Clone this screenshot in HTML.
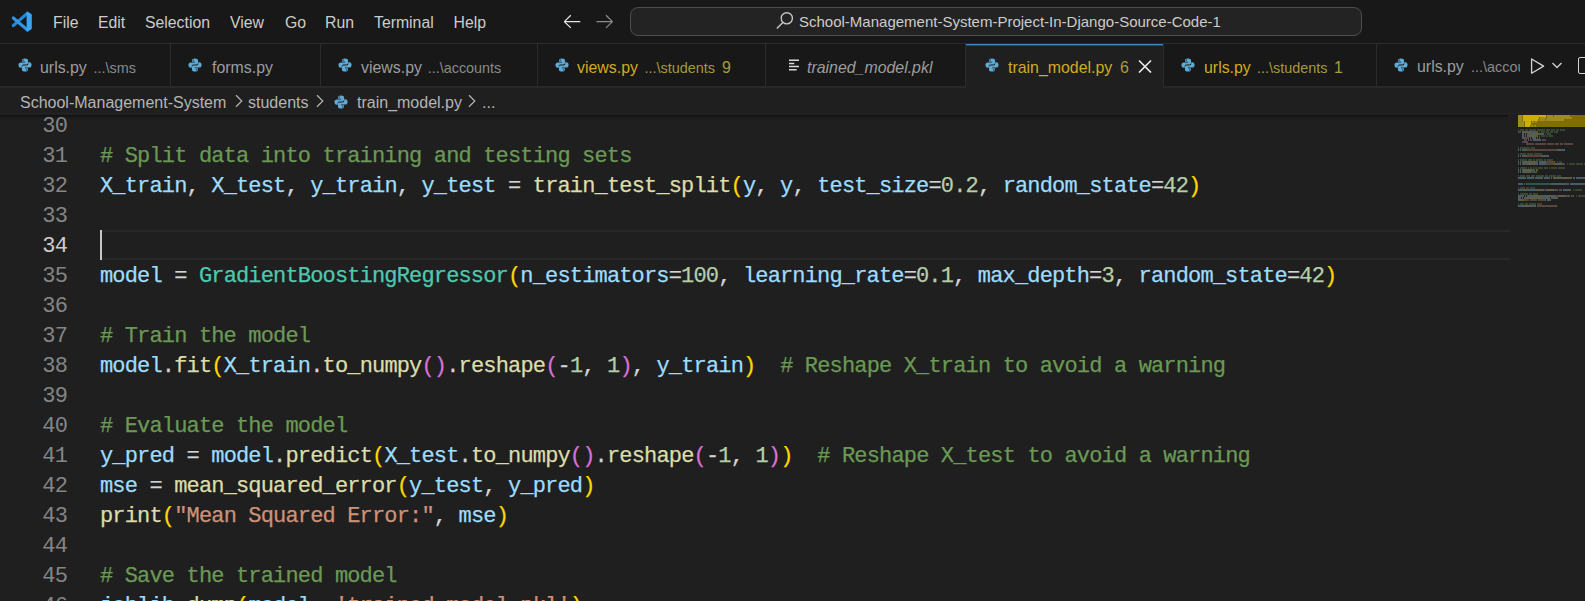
<!DOCTYPE html>
<html><head><meta charset="utf-8">
<style>
*{margin:0;padding:0;box-sizing:border-box}
html,body{width:1585px;height:601px;overflow:hidden;background:#1f1f1f}
body{position:relative;font-family:"Liberation Sans",sans-serif;color:#ccc}
.abs{position:absolute;white-space:pre}
#title{position:absolute;left:0;top:0;width:1585px;height:44px;background:#181818;border-bottom:1px solid #2b2b2b}
#tabs{position:absolute;left:0;top:44px;width:1585px;height:44px;background:#181818;border-bottom:2px solid #282828}
#crumb{position:absolute;left:0;top:88px;width:1585px;height:27px;background:#1f1f1f}
#editor{position:absolute;left:0;top:115px;width:1585px;height:486px;background:#1f1f1f;overflow:hidden}
.menu{position:absolute;top:13.5px;font-size:15.8px;color:#cccccc;line-height:18px}
.tab{position:absolute;top:44px;height:42px;border-right:1px solid #2b2b2b}
.tabt{position:absolute;top:58.5px;font-size:15.9px;line-height:18px;white-space:pre;color:#9d9d9d}
.desc{color:#8a8a8a;font-size:14.4px}
.warnd{color:#a59a3a}
.warnb{color:#ab9d38}
.warn{color:#d0ab24}
.crumbt{top:94px;font-size:16px;line-height:18px;color:#b5b5b5}
.ln{position:absolute;left:0;width:67px;text-align:right;font-family:"Liberation Mono",monospace;font-size:22px;letter-spacing:-0.84px;color:#858585;line-height:30px;height:30px;padding-top:2px}
.cl{position:absolute;left:100px;font-family:"Liberation Mono",monospace;font-size:22px;letter-spacing:-0.84px;line-height:30px;height:30px;padding-top:2px;white-space:pre;color:#d4d4d4;-webkit-text-stroke:0.25px currentColor}
.ln.act{color:#cccccc}
.c{color:#6a9955}.v{color:#9cdcfe}.f{color:#dcdcaa}.k{color:#4ec9b0}.n{color:#b5cea8}.s{color:#ce9178}.o{color:#d4d4d4}
.b1{color:#ffd700}.b2{color:#da70d6}.b3{color:#179fff}
</style></head><body>
<div id="title"></div>
<div id="tabs"></div>
<div id="crumb"></div>
<div id="editor"></div>
<div class="abs" style="left:0;top:113px;width:1585px;height:1px;background:#232323"></div>

<!-- editor -->
<div class="abs" style="left:0;top:115px;width:1508px;height:4px;background:linear-gradient(#111111,#1f1f1f)"></div>

<div class="abs" style="left:100px;top:230px;width:1410px;height:30px;border:2px solid #282828;border-left:none;border-right:none"></div>
<div class="ln" style="top:110px">30</div>
<div class="ln" style="top:140px">31</div>
<div class="cl" style="top:140px"><span class="c"># Split data into training and testing sets</span></div>
<div class="ln" style="top:170px">32</div>
<div class="cl" style="top:170px"><span class="v">X_train</span>, <span class="v">X_test</span>, <span class="v">y_train</span>, <span class="v">y_test</span> = <span class="f">train_test_split</span><span class="b1">(</span><span class="v">y</span>, <span class="v">y</span>, <span class="v">test_size</span>=<span class="n">0.2</span>, <span class="v">random_state</span>=<span class="n">42</span><span class="b1">)</span></div>
<div class="ln" style="top:200px">33</div>
<div class="ln act" style="top:230px">34</div>
<div class="ln" style="top:260px">35</div>
<div class="cl" style="top:260px"><span class="v">model</span> = <span class="k">GradientBoostingRegressor</span><span class="b1">(</span><span class="v">n_estimators</span>=<span class="n">100</span>, <span class="v">learning_rate</span>=<span class="n">0.1</span>, <span class="v">max_depth</span>=<span class="n">3</span>, <span class="v">random_state</span>=<span class="n">42</span><span class="b1">)</span></div>
<div class="ln" style="top:290px">36</div>
<div class="ln" style="top:320px">37</div>
<div class="cl" style="top:320px"><span class="c"># Train the model</span></div>
<div class="ln" style="top:350px">38</div>
<div class="cl" style="top:350px"><span class="v">model</span>.<span class="f">fit</span><span class="b1">(</span><span class="v">X_train</span>.<span class="f">to_numpy</span><span class="b2">()</span>.<span class="f">reshape</span><span class="b2">(</span>-<span class="n">1</span>, <span class="n">1</span><span class="b2">)</span>, <span class="v">y_train</span><span class="b1">)</span>  <span class="c"># Reshape X_train to avoid a warning</span></div>
<div class="ln" style="top:380px">39</div>
<div class="ln" style="top:410px">40</div>
<div class="cl" style="top:410px"><span class="c"># Evaluate the model</span></div>
<div class="ln" style="top:440px">41</div>
<div class="cl" style="top:440px"><span class="v">y_pred</span> = <span class="v">model</span>.<span class="f">predict</span><span class="b1">(</span><span class="v">X_test</span>.<span class="f">to_numpy</span><span class="b2">()</span>.<span class="f">reshape</span><span class="b2">(</span>-<span class="n">1</span>, <span class="n">1</span><span class="b2">)</span><span class="b1">)</span>  <span class="c"># Reshape X_test to avoid a warning</span></div>
<div class="ln" style="top:470px">42</div>
<div class="cl" style="top:470px"><span class="v">mse</span> = <span class="f">mean_squared_error</span><span class="b1">(</span><span class="v">y_test</span>, <span class="v">y_pred</span><span class="b1">)</span></div>
<div class="ln" style="top:500px">43</div>
<div class="cl" style="top:500px"><span class="f">print</span><span class="b1">(</span><span class="s">"Mean Squared Error:"</span>, <span class="v">mse</span><span class="b1">)</span></div>
<div class="ln" style="top:530px">44</div>
<div class="ln" style="top:560px">45</div>
<div class="cl" style="top:560px"><span class="c"># Save the trained model</span></div>
<div class="ln" style="top:590px">46</div>
<div class="cl" style="top:590px"><span class="v">joblib</span>.<span class="f">dump</span><span class="b1">(</span><span class="v">model</span>, <span class="s">'trained_model.pkl'</span><span class="b1">)</span></div>
<div class="abs" style="left:100px;top:230px;width:2px;height:30px;background:#c8c8c8"></div>
<!-- minimap --><svg class="abs" style="filter:blur(0.3px);left:1518px;top:115px" width="67" height="100" viewBox="0 0 67 100"><rect x="0" y="0" width="67" height="12" fill="#806e00"/><rect x="0" y="0" width="4" height="2" fill="#c8b84a" opacity="0.40"/><rect x="5" y="0" width="23" height="2" fill="#c8b84a" opacity="0.40"/><rect x="29" y="0" width="6" height="2" fill="#c8b84a" opacity="0.40"/><rect x="36" y="0" width="16" height="2" fill="#c8b84a" opacity="0.40"/><rect x="0" y="2" width="4" height="2" fill="#c8b84a" opacity="0.40"/><rect x="5" y="2" width="16" height="2" fill="#c8b84a" opacity="0.40"/><rect x="22" y="2" width="6" height="2" fill="#c8b84a" opacity="0.40"/><rect x="29" y="2" width="25" height="2" fill="#c8b84a" opacity="0.40"/><rect x="0" y="4" width="4" height="2" fill="#c8b84a" opacity="0.40"/><rect x="5" y="4" width="15" height="2" fill="#c8b84a" opacity="0.40"/><rect x="21" y="4" width="6" height="2" fill="#c8b84a" opacity="0.40"/><rect x="28" y="4" width="18" height="2" fill="#c8b84a" opacity="0.40"/><rect x="0" y="6" width="6" height="2" fill="#c8b84a" opacity="0.40"/><rect x="7" y="6" width="6" height="2" fill="#c8b84a" opacity="0.40"/><rect x="14" y="6" width="2" height="2" fill="#c8b84a" opacity="0.40"/><rect x="17" y="6" width="2" height="2" fill="#c8b84a" opacity="0.40"/><rect x="0" y="8" width="6" height="2" fill="#c8b84a" opacity="0.40"/><rect x="7" y="8" width="6" height="2" fill="#c8b84a" opacity="0.40"/><rect x="0" y="10" width="6" height="2" fill="#c8b84a" opacity="0.40"/><rect x="7" y="10" width="5" height="2" fill="#c8b84a" opacity="0.40"/><rect x="13" y="10" width="2" height="2" fill="#c8b84a" opacity="0.40"/><rect x="16" y="10" width="2" height="2" fill="#c8b84a" opacity="0.40"/><rect x="0" y="14" width="1" height="2" fill="#6a9955" opacity="0.32"/><rect x="2" y="14" width="4" height="2" fill="#6a9955" opacity="0.32"/><rect x="7" y="14" width="3" height="2" fill="#6a9955" opacity="0.32"/><rect x="11" y="14" width="7" height="2" fill="#6a9955" opacity="0.32"/><rect x="19" y="14" width="8" height="2" fill="#6a9955" opacity="0.32"/><rect x="28" y="14" width="4" height="2" fill="#6a9955" opacity="0.32"/><rect x="33" y="14" width="4" height="2" fill="#6a9955" opacity="0.32"/><rect x="38" y="14" width="3" height="2" fill="#6a9955" opacity="0.32"/><rect x="42" y="14" width="5" height="2" fill="#6a9955" opacity="0.32"/><rect x="0" y="16" width="3" height="2" fill="#c586c0" opacity="0.32"/><rect x="4" y="16" width="9" height="2" fill="#dcdcaa" opacity="0.32"/><rect x="13" y="16" width="1" height="2" fill="#ffd700" opacity="0.32"/><rect x="14" y="16" width="4" height="2" fill="#9cdcfe" opacity="0.32"/><rect x="18" y="16" width="1" height="2" fill="#ffd700" opacity="0.32"/><rect x="19" y="16" width="1" height="2" fill="#d4d4d4" opacity="0.32"/><rect x="21" y="16" width="1" height="2" fill="#6a9955" opacity="0.32"/><rect x="23" y="16" width="4" height="2" fill="#6a9955" opacity="0.32"/><rect x="28" y="16" width="3" height="2" fill="#6a9955" opacity="0.32"/><rect x="32" y="16" width="3" height="2" fill="#6a9955" opacity="0.32"/><rect x="36" y="16" width="4" height="2" fill="#6a9955" opacity="0.32"/><rect x="4" y="18" width="2" height="2" fill="#9cdcfe" opacity="0.32"/><rect x="7" y="18" width="1" height="2" fill="#d4d4d4" opacity="0.32"/><rect x="9" y="18" width="2" height="2" fill="#9cdcfe" opacity="0.32"/><rect x="11" y="18" width="1" height="2" fill="#d4d4d4" opacity="0.32"/><rect x="12" y="18" width="8" height="2" fill="#dcdcaa" opacity="0.32"/><rect x="20" y="18" width="1" height="2" fill="#ffd700" opacity="0.32"/><rect x="21" y="18" width="4" height="2" fill="#9cdcfe" opacity="0.32"/><rect x="25" y="18" width="1" height="2" fill="#ffd700" opacity="0.32"/><rect x="27" y="18" width="1" height="2" fill="#6a9955" opacity="0.32"/><rect x="29" y="18" width="4" height="2" fill="#6a9955" opacity="0.32"/><rect x="4" y="20" width="2" height="2" fill="#9cdcfe" opacity="0.32"/><rect x="7" y="20" width="1" height="2" fill="#d4d4d4" opacity="0.32"/><rect x="9" y="20" width="2" height="2" fill="#9cdcfe" opacity="0.32"/><rect x="11" y="20" width="1" height="2" fill="#d4d4d4" opacity="0.32"/><rect x="12" y="20" width="6" height="2" fill="#dcdcaa" opacity="0.32"/><rect x="18" y="20" width="1" height="2" fill="#ffd700" opacity="0.32"/><rect x="19" y="20" width="1" height="2" fill="#ffd700" opacity="0.32"/><rect x="21" y="20" width="1" height="2" fill="#6a9955" opacity="0.32"/><rect x="23" y="20" width="4" height="2" fill="#6a9955" opacity="0.32"/><rect x="28" y="20" width="2" height="2" fill="#6a9955" opacity="0.32"/><rect x="31" y="20" width="4" height="2" fill="#6a9955" opacity="0.32"/><rect x="4" y="22" width="2" height="2" fill="#9cdcfe" opacity="0.32"/><rect x="6" y="22" width="1" height="2" fill="#ffd700" opacity="0.32"/><rect x="7" y="22" width="3" height="2" fill="#ce9178" opacity="0.32"/><rect x="10" y="22" width="1" height="2" fill="#ffd700" opacity="0.32"/><rect x="12" y="22" width="1" height="2" fill="#d4d4d4" opacity="0.32"/><rect x="14" y="22" width="2" height="2" fill="#9cdcfe" opacity="0.32"/><rect x="16" y="22" width="1" height="2" fill="#d4d4d4" opacity="0.32"/><rect x="17" y="22" width="1" height="2" fill="#9cdcfe" opacity="0.32"/><rect x="19" y="22" width="1" height="2" fill="#d4d4d4" opacity="0.32"/><rect x="21" y="22" width="1" height="2" fill="#b5cea8" opacity="0.32"/><rect x="6" y="24" width="3" height="2" fill="#c586c0" opacity="0.32"/><rect x="10" y="24" width="1" height="2" fill="#9cdcfe" opacity="0.32"/><rect x="12" y="24" width="2" height="2" fill="#c586c0" opacity="0.32"/><rect x="15" y="24" width="2" height="2" fill="#9cdcfe" opacity="0.32"/><rect x="17" y="24" width="1" height="2" fill="#d4d4d4" opacity="0.32"/><rect x="18" y="24" width="4" height="2" fill="#9cdcfe" opacity="0.32"/><rect x="22" y="24" width="1" height="2" fill="#d4d4d4" opacity="0.32"/><rect x="24" y="24" width="4" height="2" fill="#c586c0" opacity="0.32"/><rect x="4" y="26" width="6" height="2" fill="#c586c0" opacity="0.32"/><rect x="8" y="28" width="8" height="2" fill="#ce9178" opacity="0.32"/><rect x="17" y="28" width="11" height="2" fill="#ce9178" opacity="0.32"/><rect x="29" y="28" width="7" height="2" fill="#ce9178" opacity="0.32"/><rect x="37" y="28" width="4" height="2" fill="#ce9178" opacity="0.32"/><rect x="42" y="28" width="3" height="2" fill="#ce9178" opacity="0.32"/><rect x="46" y="28" width="9" height="2" fill="#ce9178" opacity="0.32"/><rect x="0" y="32" width="1" height="2" fill="#6a9955" opacity="0.32"/><rect x="2" y="32" width="10" height="2" fill="#6a9955" opacity="0.32"/><rect x="13" y="32" width="4" height="2" fill="#6a9955" opacity="0.32"/><rect x="0" y="34" width="1" height="2" fill="#9cdcfe" opacity="0.32"/><rect x="2" y="34" width="1" height="2" fill="#d4d4d4" opacity="0.32"/><rect x="4" y="34" width="4" height="2" fill="#9cdcfe" opacity="0.32"/><rect x="8" y="34" width="1" height="2" fill="#ffd700" opacity="0.32"/><rect x="9" y="34" width="30" height="2" fill="#ce9178" opacity="0.32"/><rect x="39" y="34" width="1" height="2" fill="#ffd700" opacity="0.32"/><rect x="40" y="34" width="1" height="2" fill="#d4d4d4" opacity="0.32"/><rect x="41" y="34" width="6" height="2" fill="#9cdcfe" opacity="0.32"/><rect x="0" y="38" width="1" height="2" fill="#6a9955" opacity="0.32"/><rect x="2" y="38" width="6" height="2" fill="#6a9955" opacity="0.32"/><rect x="9" y="38" width="6" height="2" fill="#6a9955" opacity="0.32"/><rect x="16" y="38" width="8" height="2" fill="#6a9955" opacity="0.32"/><rect x="0" y="40" width="1" height="2" fill="#9cdcfe" opacity="0.32"/><rect x="2" y="40" width="1" height="2" fill="#d4d4d4" opacity="0.32"/><rect x="4" y="40" width="4" height="2" fill="#9cdcfe" opacity="0.32"/><rect x="8" y="40" width="1" height="2" fill="#ffd700" opacity="0.32"/><rect x="9" y="40" width="14" height="2" fill="#ce9178" opacity="0.32"/><rect x="23" y="40" width="1" height="2" fill="#ffd700" opacity="0.32"/><rect x="24" y="40" width="1" height="2" fill="#d4d4d4" opacity="0.32"/><rect x="25" y="40" width="6" height="2" fill="#9cdcfe" opacity="0.32"/><rect x="0" y="44" width="1" height="2" fill="#6a9955" opacity="0.32"/><rect x="2" y="44" width="7" height="2" fill="#6a9955" opacity="0.32"/><rect x="10" y="44" width="4" height="2" fill="#6a9955" opacity="0.32"/><rect x="15" y="44" width="2" height="2" fill="#6a9955" opacity="0.32"/><rect x="18" y="44" width="7" height="2" fill="#6a9955" opacity="0.32"/><rect x="26" y="44" width="2" height="2" fill="#6a9955" opacity="0.32"/><rect x="29" y="44" width="6" height="2" fill="#6a9955" opacity="0.32"/><rect x="0" y="46" width="1" height="2" fill="#9cdcfe" opacity="0.32"/><rect x="2" y="46" width="1" height="2" fill="#d4d4d4" opacity="0.32"/><rect x="4" y="46" width="2" height="2" fill="#9cdcfe" opacity="0.32"/><rect x="6" y="46" width="1" height="2" fill="#d4d4d4" opacity="0.32"/><rect x="7" y="46" width="10" height="2" fill="#dcdcaa" opacity="0.32"/><rect x="17" y="46" width="1" height="2" fill="#ffd700" opacity="0.32"/><rect x="18" y="46" width="1" height="2" fill="#9cdcfe" opacity="0.32"/><rect x="19" y="46" width="1" height="2" fill="#d4d4d4" opacity="0.32"/><rect x="21" y="46" width="6" height="2" fill="#9cdcfe" opacity="0.32"/><rect x="27" y="46" width="1" height="2" fill="#d4d4d4" opacity="0.32"/><rect x="28" y="46" width="8" height="2" fill="#ce9178" opacity="0.32"/><rect x="36" y="46" width="1" height="2" fill="#ffd700" opacity="0.32"/><rect x="39" y="46" width="1" height="2" fill="#6a9955" opacity="0.32"/><rect x="41" y="46" width="3" height="2" fill="#6a9955" opacity="0.32"/><rect x="0" y="48" width="1" height="2" fill="#9cdcfe" opacity="0.32"/><rect x="2" y="48" width="1" height="2" fill="#d4d4d4" opacity="0.32"/><rect x="4" y="48" width="2" height="2" fill="#9cdcfe" opacity="0.32"/><rect x="6" y="48" width="1" height="2" fill="#d4d4d4" opacity="0.32"/><rect x="7" y="48" width="10" height="2" fill="#dcdcaa" opacity="0.32"/><rect x="17" y="48" width="1" height="2" fill="#ffd700" opacity="0.32"/><rect x="18" y="48" width="1" height="2" fill="#9cdcfe" opacity="0.32"/><rect x="19" y="48" width="1" height="2" fill="#d4d4d4" opacity="0.32"/><rect x="21" y="48" width="6" height="2" fill="#9cdcfe" opacity="0.32"/><rect x="27" y="48" width="1" height="2" fill="#d4d4d4" opacity="0.32"/><rect x="28" y="48" width="8" height="2" fill="#ce9178" opacity="0.32"/><rect x="36" y="48" width="1" height="2" fill="#ffd700" opacity="0.32"/><rect x="37" y="48" width="1" height="2" fill="#d4d4d4" opacity="0.32"/><rect x="38" y="48" width="6" height="2" fill="#dcdcaa" opacity="0.32"/><rect x="44" y="48" width="1" height="2" fill="#da70d6" opacity="0.32"/><rect x="45" y="48" width="1" height="2" fill="#b5cea8" opacity="0.32"/><rect x="46" y="48" width="1" height="2" fill="#da70d6" opacity="0.32"/><rect x="49" y="48" width="1" height="2" fill="#6a9955" opacity="0.32"/><rect x="51" y="48" width="6" height="2" fill="#6a9955" opacity="0.32"/><rect x="58" y="48" width="7" height="2" fill="#6a9955" opacity="0.32"/><rect x="66" y="48" width="1" height="2" fill="#6a9955" opacity="0.32"/><rect x="0" y="52" width="1" height="2" fill="#6a9955" opacity="0.32"/><rect x="2" y="52" width="7" height="2" fill="#6a9955" opacity="0.32"/><rect x="10" y="52" width="1" height="2" fill="#6a9955" opacity="0.32"/><rect x="12" y="52" width="2" height="2" fill="#6a9955" opacity="0.32"/><rect x="15" y="52" width="1" height="2" fill="#6a9955" opacity="0.32"/><rect x="17" y="52" width="2" height="2" fill="#6a9955" opacity="0.32"/><rect x="20" y="52" width="5" height="2" fill="#6a9955" opacity="0.32"/><rect x="26" y="52" width="4" height="2" fill="#6a9955" opacity="0.32"/><rect x="31" y="52" width="1" height="2" fill="#6a9955" opacity="0.32"/><rect x="33" y="52" width="6" height="2" fill="#6a9955" opacity="0.32"/><rect x="40" y="52" width="7" height="2" fill="#6a9955" opacity="0.32"/><rect x="0" y="54" width="1" height="2" fill="#9cdcfe" opacity="0.32"/><rect x="2" y="54" width="1" height="2" fill="#d4d4d4" opacity="0.32"/><rect x="4" y="54" width="1" height="2" fill="#9cdcfe" opacity="0.32"/><rect x="5" y="54" width="1" height="2" fill="#d4d4d4" opacity="0.32"/><rect x="6" y="54" width="7" height="2" fill="#dcdcaa" opacity="0.32"/><rect x="13" y="54" width="1" height="2" fill="#ffd700" opacity="0.32"/><rect x="14" y="54" width="3" height="2" fill="#b5cea8" opacity="0.32"/><rect x="18" y="54" width="1" height="2" fill="#b5cea8" opacity="0.32"/><rect x="19" y="54" width="1" height="2" fill="#ffd700" opacity="0.32"/><rect x="0" y="56" width="1" height="2" fill="#9cdcfe" opacity="0.32"/><rect x="2" y="56" width="1" height="2" fill="#d4d4d4" opacity="0.32"/><rect x="4" y="56" width="1" height="2" fill="#9cdcfe" opacity="0.32"/><rect x="5" y="56" width="1" height="2" fill="#d4d4d4" opacity="0.32"/><rect x="6" y="56" width="6" height="2" fill="#dcdcaa" opacity="0.32"/><rect x="12" y="56" width="1" height="2" fill="#ffd700" opacity="0.32"/><rect x="13" y="56" width="5" height="2" fill="#4ec9b0" opacity="0.32"/><rect x="18" y="56" width="1" height="2" fill="#ffd700" opacity="0.32"/><rect x="0" y="60" width="1" height="2" fill="#6a9955" opacity="0.32"/><rect x="2" y="60" width="5" height="2" fill="#6a9955" opacity="0.32"/><rect x="8" y="60" width="4" height="2" fill="#6a9955" opacity="0.32"/><rect x="13" y="60" width="4" height="2" fill="#6a9955" opacity="0.32"/><rect x="18" y="60" width="8" height="2" fill="#6a9955" opacity="0.32"/><rect x="27" y="60" width="3" height="2" fill="#6a9955" opacity="0.32"/><rect x="31" y="60" width="7" height="2" fill="#6a9955" opacity="0.32"/><rect x="39" y="60" width="4" height="2" fill="#6a9955" opacity="0.32"/><rect x="0" y="62" width="7" height="2" fill="#9cdcfe" opacity="0.32"/><rect x="7" y="62" width="1" height="2" fill="#d4d4d4" opacity="0.32"/><rect x="9" y="62" width="6" height="2" fill="#9cdcfe" opacity="0.32"/><rect x="15" y="62" width="1" height="2" fill="#d4d4d4" opacity="0.32"/><rect x="17" y="62" width="7" height="2" fill="#9cdcfe" opacity="0.32"/><rect x="24" y="62" width="1" height="2" fill="#d4d4d4" opacity="0.32"/><rect x="26" y="62" width="6" height="2" fill="#9cdcfe" opacity="0.32"/><rect x="33" y="62" width="1" height="2" fill="#d4d4d4" opacity="0.32"/><rect x="35" y="62" width="16" height="2" fill="#dcdcaa" opacity="0.32"/><rect x="51" y="62" width="1" height="2" fill="#ffd700" opacity="0.32"/><rect x="52" y="62" width="1" height="2" fill="#9cdcfe" opacity="0.32"/><rect x="53" y="62" width="1" height="2" fill="#d4d4d4" opacity="0.32"/><rect x="55" y="62" width="1" height="2" fill="#9cdcfe" opacity="0.32"/><rect x="56" y="62" width="1" height="2" fill="#d4d4d4" opacity="0.32"/><rect x="58" y="62" width="9" height="2" fill="#9cdcfe" opacity="0.32"/><rect x="0" y="68" width="5" height="2" fill="#9cdcfe" opacity="0.32"/><rect x="6" y="68" width="1" height="2" fill="#d4d4d4" opacity="0.32"/><rect x="8" y="68" width="25" height="2" fill="#4ec9b0" opacity="0.32"/><rect x="33" y="68" width="1" height="2" fill="#ffd700" opacity="0.32"/><rect x="34" y="68" width="12" height="2" fill="#9cdcfe" opacity="0.32"/><rect x="46" y="68" width="1" height="2" fill="#d4d4d4" opacity="0.32"/><rect x="47" y="68" width="3" height="2" fill="#b5cea8" opacity="0.32"/><rect x="50" y="68" width="1" height="2" fill="#d4d4d4" opacity="0.32"/><rect x="52" y="68" width="13" height="2" fill="#9cdcfe" opacity="0.32"/><rect x="65" y="68" width="1" height="2" fill="#d4d4d4" opacity="0.32"/><rect x="66" y="68" width="1" height="2" fill="#b5cea8" opacity="0.32"/><rect x="0" y="72" width="1" height="2" fill="#6a9955" opacity="0.32"/><rect x="2" y="72" width="5" height="2" fill="#6a9955" opacity="0.32"/><rect x="8" y="72" width="3" height="2" fill="#6a9955" opacity="0.32"/><rect x="12" y="72" width="5" height="2" fill="#6a9955" opacity="0.32"/><rect x="0" y="74" width="5" height="2" fill="#9cdcfe" opacity="0.32"/><rect x="5" y="74" width="1" height="2" fill="#d4d4d4" opacity="0.32"/><rect x="6" y="74" width="3" height="2" fill="#dcdcaa" opacity="0.32"/><rect x="9" y="74" width="1" height="2" fill="#ffd700" opacity="0.32"/><rect x="10" y="74" width="7" height="2" fill="#9cdcfe" opacity="0.32"/><rect x="17" y="74" width="1" height="2" fill="#d4d4d4" opacity="0.32"/><rect x="18" y="74" width="8" height="2" fill="#dcdcaa" opacity="0.32"/><rect x="26" y="74" width="2" height="2" fill="#da70d6" opacity="0.32"/><rect x="28" y="74" width="1" height="2" fill="#d4d4d4" opacity="0.32"/><rect x="29" y="74" width="7" height="2" fill="#dcdcaa" opacity="0.32"/><rect x="36" y="74" width="1" height="2" fill="#da70d6" opacity="0.32"/><rect x="37" y="74" width="3" height="2" fill="#b5cea8" opacity="0.32"/><rect x="41" y="74" width="1" height="2" fill="#b5cea8" opacity="0.32"/><rect x="42" y="74" width="1" height="2" fill="#da70d6" opacity="0.32"/><rect x="43" y="74" width="1" height="2" fill="#d4d4d4" opacity="0.32"/><rect x="45" y="74" width="7" height="2" fill="#9cdcfe" opacity="0.32"/><rect x="52" y="74" width="1" height="2" fill="#ffd700" opacity="0.32"/><rect x="55" y="74" width="1" height="2" fill="#6a9955" opacity="0.32"/><rect x="57" y="74" width="7" height="2" fill="#6a9955" opacity="0.32"/><rect x="0" y="78" width="1" height="2" fill="#6a9955" opacity="0.32"/><rect x="2" y="78" width="8" height="2" fill="#6a9955" opacity="0.32"/><rect x="11" y="78" width="3" height="2" fill="#6a9955" opacity="0.32"/><rect x="15" y="78" width="5" height="2" fill="#6a9955" opacity="0.32"/><rect x="0" y="80" width="6" height="2" fill="#9cdcfe" opacity="0.32"/><rect x="7" y="80" width="1" height="2" fill="#d4d4d4" opacity="0.32"/><rect x="9" y="80" width="5" height="2" fill="#9cdcfe" opacity="0.32"/><rect x="14" y="80" width="1" height="2" fill="#d4d4d4" opacity="0.32"/><rect x="15" y="80" width="7" height="2" fill="#dcdcaa" opacity="0.32"/><rect x="22" y="80" width="1" height="2" fill="#ffd700" opacity="0.32"/><rect x="23" y="80" width="6" height="2" fill="#9cdcfe" opacity="0.32"/><rect x="29" y="80" width="1" height="2" fill="#d4d4d4" opacity="0.32"/><rect x="30" y="80" width="8" height="2" fill="#dcdcaa" opacity="0.32"/><rect x="38" y="80" width="2" height="2" fill="#da70d6" opacity="0.32"/><rect x="40" y="80" width="1" height="2" fill="#d4d4d4" opacity="0.32"/><rect x="41" y="80" width="7" height="2" fill="#dcdcaa" opacity="0.32"/><rect x="48" y="80" width="1" height="2" fill="#da70d6" opacity="0.32"/><rect x="49" y="80" width="3" height="2" fill="#b5cea8" opacity="0.32"/><rect x="53" y="80" width="1" height="2" fill="#b5cea8" opacity="0.32"/><rect x="54" y="80" width="2" height="2" fill="#da70d6" opacity="0.32"/><rect x="58" y="80" width="1" height="2" fill="#6a9955" opacity="0.32"/><rect x="60" y="80" width="7" height="2" fill="#6a9955" opacity="0.32"/><rect x="0" y="82" width="3" height="2" fill="#9cdcfe" opacity="0.32"/><rect x="4" y="82" width="1" height="2" fill="#d4d4d4" opacity="0.32"/><rect x="6" y="82" width="18" height="2" fill="#dcdcaa" opacity="0.32"/><rect x="24" y="82" width="1" height="2" fill="#ffd700" opacity="0.32"/><rect x="25" y="82" width="6" height="2" fill="#9cdcfe" opacity="0.32"/><rect x="31" y="82" width="1" height="2" fill="#d4d4d4" opacity="0.32"/><rect x="33" y="82" width="6" height="2" fill="#9cdcfe" opacity="0.32"/><rect x="39" y="82" width="1" height="2" fill="#ffd700" opacity="0.32"/><rect x="0" y="84" width="5" height="2" fill="#dcdcaa" opacity="0.32"/><rect x="5" y="84" width="1" height="2" fill="#ffd700" opacity="0.32"/><rect x="6" y="84" width="5" height="2" fill="#ce9178" opacity="0.32"/><rect x="12" y="84" width="7" height="2" fill="#ce9178" opacity="0.32"/><rect x="20" y="84" width="7" height="2" fill="#ce9178" opacity="0.32"/><rect x="27" y="84" width="1" height="2" fill="#d4d4d4" opacity="0.32"/><rect x="29" y="84" width="3" height="2" fill="#9cdcfe" opacity="0.32"/><rect x="32" y="84" width="1" height="2" fill="#ffd700" opacity="0.32"/><rect x="0" y="88" width="1" height="2" fill="#6a9955" opacity="0.32"/><rect x="2" y="88" width="4" height="2" fill="#6a9955" opacity="0.32"/><rect x="7" y="88" width="3" height="2" fill="#6a9955" opacity="0.32"/><rect x="11" y="88" width="7" height="2" fill="#6a9955" opacity="0.32"/><rect x="19" y="88" width="5" height="2" fill="#6a9955" opacity="0.32"/><rect x="0" y="90" width="6" height="2" fill="#9cdcfe" opacity="0.32"/><rect x="6" y="90" width="1" height="2" fill="#d4d4d4" opacity="0.32"/><rect x="7" y="90" width="4" height="2" fill="#dcdcaa" opacity="0.32"/><rect x="11" y="90" width="1" height="2" fill="#ffd700" opacity="0.32"/><rect x="12" y="90" width="5" height="2" fill="#9cdcfe" opacity="0.32"/><rect x="17" y="90" width="1" height="2" fill="#d4d4d4" opacity="0.32"/><rect x="19" y="90" width="19" height="2" fill="#ce9178" opacity="0.32"/><rect x="38" y="90" width="1" height="2" fill="#ffd700" opacity="0.32"/><rect x="5" y="0" width="23" height="2" fill="#d8b400" opacity="0.85"/><rect x="5" y="2" width="16" height="2" fill="#d8b400" opacity="0.85"/><rect x="5" y="4" width="15" height="2" fill="#d8b400" opacity="0.85"/><rect x="7" y="6" width="6" height="2" fill="#d8b400" opacity="0.85"/><rect x="7" y="8" width="6" height="2" fill="#d8b400" opacity="0.85"/><rect x="7" y="10" width="5" height="2" fill="#d8b400" opacity="0.85"/></svg><!-- /minimap -->
<!-- title bar -->
<svg class="abs" style="left:11px;top:11px" width="22" height="22" viewBox="0 0 22 22">
  <path d="M16.5 2.2 L2.3 14.6" stroke="#2489db" stroke-width="3.1" stroke-linecap="round"/>
  <path d="M16.5 19 L2.3 7" stroke="#2f97e8" stroke-width="3.1" stroke-linecap="round"/>
  <path d="M15.6 0.6 L19.8 2.6 Q20.8 3.1 20.8 4.3 V17 Q20.8 18.2 19.8 18.7 L15.6 20.7 Z" fill="#3aa5f2"/>
</svg>
<div class="menu" style="left:53px">File</div>
<div class="menu" style="left:98px">Edit</div>
<div class="menu" style="left:145px">Selection</div>
<div class="menu" style="left:230px">View</div>
<div class="menu" style="left:285px">Go</div>
<div class="menu" style="left:325px">Run</div>
<div class="menu" style="left:374px">Terminal</div>
<div class="menu" style="left:453.5px">Help</div>

<svg class="abs" style="left:560px;top:12px" width="60" height="20" viewBox="0 0 60 20">
  <path d="M4.3 9.6 H20.3 M4.3 9.6 L10.8 3.3 M4.3 9.6 L10.8 15.9" stroke="#e6e6e6" stroke-width="1.25" fill="none"/>
  <path d="M36.5 9.6 H52.5 M52.5 9.6 L46 3.3 M52.5 9.6 L46 15.9" stroke="#8c8c8c" stroke-width="1.25" fill="none"/>
</svg>
<div class="abs" style="left:630px;top:7px;width:732px;height:29px;border:1px solid #4d4d4d;border-radius:8px;background:#232323"></div>
<svg class="abs" style="left:775px;top:11px" width="20" height="20" viewBox="0 0 20 20">
  <circle cx="11.8" cy="7.3" r="5.6" stroke="#c8c8c8" stroke-width="1.35" fill="none"/>
  <path d="M7.8 11.4 L1.8 17.6" stroke="#c8c8c8" stroke-width="1.4"/>
</svg>
<div class="abs" style="left:799px;top:13px;font-size:15px;line-height:17px;color:#cccccc">School-Management-System-Project-In-Django-Source-Code-1</div>


<!-- tabs -->
<div class="tab" style="left:0;width:171px"></div>
<div class="tab" style="left:171px;width:150px"></div>
<div class="tab" style="left:321px;width:217px"></div>
<div class="tab" style="left:538px;width:228px"></div>
<div class="tab" style="left:766px;width:200px"></div>
<div class="tab" style="left:966px;width:198px;background:#1f1f1f;top:44px;height:44px"></div>
<div class="abs" style="left:966px;top:44px;width:197px;height:1px;background:#3d88cc"></div>
<div class="abs" style="left:966px;top:45px;width:197px;height:1px;background:#0f4d85"></div>
<div class="tab" style="left:1164px;width:213px"></div>
<div class="tab" style="left:1377px;width:208px;border-right:none"></div>
<svg class="abs" style="left:18px;top:58px" width="14" height="14" viewBox="0 0 16 16"><path fill="#5eaad6" fill-rule="evenodd" d="M7.9 0.5C5.2 0.5 4.6 1.6 4.6 2.6V4.4H8.1V5.1H3.1C1.6 5.1 0.5 6.2 0.5 8.1C0.5 10 1.5 11.1 3 11.1H4.3V9.3C4.3 8.2 5.2 7.3 6.3 7.3H9.7C10.7 7.3 11.5 6.5 11.5 5.5V2.6C11.5 1.5 10.5 0.5 7.9 0.5ZM6 1.6A0.75 0.75 0 1 1 6 3.1A0.75 0.75 0 1 1 6 1.6Z"/><path fill="#5eaad6" fill-rule="evenodd" d="M8.1 15.5C10.8 15.5 11.4 14.4 11.4 13.4V11.6H7.9V10.9H12.9C14.4 10.9 15.5 9.8 15.5 7.9C15.5 6 14.5 4.9 13 4.9H11.7V6.7C11.7 7.8 10.8 8.7 9.7 8.7H6.3C5.3 8.7 4.5 9.5 4.5 10.5V13.4C4.5 14.5 5.5 15.5 8.1 15.5ZM10 14.4A0.75 0.75 0 1 1 10 12.9A0.75 0.75 0 1 1 10 14.4Z"/></svg>
<div class="tabt" style="left:40px">urls.py</div><div class="tabt desc" style="left:93.5px">...\sms</div>
<svg class="abs" style="left:188px;top:58px" width="14" height="14" viewBox="0 0 16 16"><path fill="#5eaad6" fill-rule="evenodd" d="M7.9 0.5C5.2 0.5 4.6 1.6 4.6 2.6V4.4H8.1V5.1H3.1C1.6 5.1 0.5 6.2 0.5 8.1C0.5 10 1.5 11.1 3 11.1H4.3V9.3C4.3 8.2 5.2 7.3 6.3 7.3H9.7C10.7 7.3 11.5 6.5 11.5 5.5V2.6C11.5 1.5 10.5 0.5 7.9 0.5ZM6 1.6A0.75 0.75 0 1 1 6 3.1A0.75 0.75 0 1 1 6 1.6Z"/><path fill="#5eaad6" fill-rule="evenodd" d="M8.1 15.5C10.8 15.5 11.4 14.4 11.4 13.4V11.6H7.9V10.9H12.9C14.4 10.9 15.5 9.8 15.5 7.9C15.5 6 14.5 4.9 13 4.9H11.7V6.7C11.7 7.8 10.8 8.7 9.7 8.7H6.3C5.3 8.7 4.5 9.5 4.5 10.5V13.4C4.5 14.5 5.5 15.5 8.1 15.5ZM10 14.4A0.75 0.75 0 1 1 10 12.9A0.75 0.75 0 1 1 10 14.4Z"/></svg>
<div class="tabt" style="left:212px">forms.py</div>
<svg class="abs" style="left:338px;top:58px" width="14" height="14" viewBox="0 0 16 16"><path fill="#5eaad6" fill-rule="evenodd" d="M7.9 0.5C5.2 0.5 4.6 1.6 4.6 2.6V4.4H8.1V5.1H3.1C1.6 5.1 0.5 6.2 0.5 8.1C0.5 10 1.5 11.1 3 11.1H4.3V9.3C4.3 8.2 5.2 7.3 6.3 7.3H9.7C10.7 7.3 11.5 6.5 11.5 5.5V2.6C11.5 1.5 10.5 0.5 7.9 0.5ZM6 1.6A0.75 0.75 0 1 1 6 3.1A0.75 0.75 0 1 1 6 1.6Z"/><path fill="#5eaad6" fill-rule="evenodd" d="M8.1 15.5C10.8 15.5 11.4 14.4 11.4 13.4V11.6H7.9V10.9H12.9C14.4 10.9 15.5 9.8 15.5 7.9C15.5 6 14.5 4.9 13 4.9H11.7V6.7C11.7 7.8 10.8 8.7 9.7 8.7H6.3C5.3 8.7 4.5 9.5 4.5 10.5V13.4C4.5 14.5 5.5 15.5 8.1 15.5ZM10 14.4A0.75 0.75 0 1 1 10 12.9A0.75 0.75 0 1 1 10 14.4Z"/></svg>
<div class="tabt" style="left:361px">views.py</div><div class="tabt desc" style="left:427.7px">...\accounts</div>
<svg class="abs" style="left:555px;top:58px" width="14" height="14" viewBox="0 0 16 16"><path fill="#5eaad6" fill-rule="evenodd" d="M7.9 0.5C5.2 0.5 4.6 1.6 4.6 2.6V4.4H8.1V5.1H3.1C1.6 5.1 0.5 6.2 0.5 8.1C0.5 10 1.5 11.1 3 11.1H4.3V9.3C4.3 8.2 5.2 7.3 6.3 7.3H9.7C10.7 7.3 11.5 6.5 11.5 5.5V2.6C11.5 1.5 10.5 0.5 7.9 0.5ZM6 1.6A0.75 0.75 0 1 1 6 3.1A0.75 0.75 0 1 1 6 1.6Z"/><path fill="#5eaad6" fill-rule="evenodd" d="M8.1 15.5C10.8 15.5 11.4 14.4 11.4 13.4V11.6H7.9V10.9H12.9C14.4 10.9 15.5 9.8 15.5 7.9C15.5 6 14.5 4.9 13 4.9H11.7V6.7C11.7 7.8 10.8 8.7 9.7 8.7H6.3C5.3 8.7 4.5 9.5 4.5 10.5V13.4C4.5 14.5 5.5 15.5 8.1 15.5ZM10 14.4A0.75 0.75 0 1 1 10 12.9A0.75 0.75 0 1 1 10 14.4Z"/></svg>
<div class="tabt warn" style="left:577px">views.py</div><div class="tabt desc warnd" style="left:644.5px">...\students</div><div class="tabt warnb" style="left:722px">9</div>
<svg class="abs" style="left:787px;top:58px" width="14" height="14" viewBox="0 0 14 14"><path d="M2 2.3H12M2 5.5H7.3M2 8.5H12M2 11.7H9.7" stroke="#d8d8d8" stroke-width="1.6"/></svg>
<div class="tabt" style="left:807px;font-style:italic">trained_model.pkl</div>
<svg class="abs" style="left:985px;top:58px" width="14" height="14" viewBox="0 0 16 16"><path fill="#5eaad6" fill-rule="evenodd" d="M7.9 0.5C5.2 0.5 4.6 1.6 4.6 2.6V4.4H8.1V5.1H3.1C1.6 5.1 0.5 6.2 0.5 8.1C0.5 10 1.5 11.1 3 11.1H4.3V9.3C4.3 8.2 5.2 7.3 6.3 7.3H9.7C10.7 7.3 11.5 6.5 11.5 5.5V2.6C11.5 1.5 10.5 0.5 7.9 0.5ZM6 1.6A0.75 0.75 0 1 1 6 3.1A0.75 0.75 0 1 1 6 1.6Z"/><path fill="#5eaad6" fill-rule="evenodd" d="M8.1 15.5C10.8 15.5 11.4 14.4 11.4 13.4V11.6H7.9V10.9H12.9C14.4 10.9 15.5 9.8 15.5 7.9C15.5 6 14.5 4.9 13 4.9H11.7V6.7C11.7 7.8 10.8 8.7 9.7 8.7H6.3C5.3 8.7 4.5 9.5 4.5 10.5V13.4C4.5 14.5 5.5 15.5 8.1 15.5ZM10 14.4A0.75 0.75 0 1 1 10 12.9A0.75 0.75 0 1 1 10 14.4Z"/></svg>
<div class="tabt warn" style="left:1008px">train_model.py</div><div class="tabt warnb" style="left:1120px">6</div>
<svg class="abs" style="left:1138px;top:59px" width="14" height="14" viewBox="0 0 14 14"><path d="M1 1.5L13 13.5M13 1.5L1 13.5" stroke="#e8e8e8" stroke-width="1.7"/></svg>
<svg class="abs" style="left:1181px;top:58px" width="14" height="14" viewBox="0 0 16 16"><path fill="#5eaad6" fill-rule="evenodd" d="M7.9 0.5C5.2 0.5 4.6 1.6 4.6 2.6V4.4H8.1V5.1H3.1C1.6 5.1 0.5 6.2 0.5 8.1C0.5 10 1.5 11.1 3 11.1H4.3V9.3C4.3 8.2 5.2 7.3 6.3 7.3H9.7C10.7 7.3 11.5 6.5 11.5 5.5V2.6C11.5 1.5 10.5 0.5 7.9 0.5ZM6 1.6A0.75 0.75 0 1 1 6 3.1A0.75 0.75 0 1 1 6 1.6Z"/><path fill="#5eaad6" fill-rule="evenodd" d="M8.1 15.5C10.8 15.5 11.4 14.4 11.4 13.4V11.6H7.9V10.9H12.9C14.4 10.9 15.5 9.8 15.5 7.9C15.5 6 14.5 4.9 13 4.9H11.7V6.7C11.7 7.8 10.8 8.7 9.7 8.7H6.3C5.3 8.7 4.5 9.5 4.5 10.5V13.4C4.5 14.5 5.5 15.5 8.1 15.5ZM10 14.4A0.75 0.75 0 1 1 10 12.9A0.75 0.75 0 1 1 10 14.4Z"/></svg>
<div class="tabt warn" style="left:1204px">urls.py</div><div class="tabt desc warnd" style="left:1257px">...\students</div><div class="tabt warnb" style="left:1334px">1</div>
<div class="abs" style="left:1377px;top:45px;width:143px;height:41px;overflow:hidden">
<svg class="abs" style="left:17px;top:13px" width="14" height="14" viewBox="0 0 16 16"><path fill="#5eaad6" fill-rule="evenodd" d="M7.9 0.5C5.2 0.5 4.6 1.6 4.6 2.6V4.4H8.1V5.1H3.1C1.6 5.1 0.5 6.2 0.5 8.1C0.5 10 1.5 11.1 3 11.1H4.3V9.3C4.3 8.2 5.2 7.3 6.3 7.3H9.7C10.7 7.3 11.5 6.5 11.5 5.5V2.6C11.5 1.5 10.5 0.5 7.9 0.5ZM6 1.6A0.75 0.75 0 1 1 6 3.1A0.75 0.75 0 1 1 6 1.6Z"/><path fill="#5eaad6" fill-rule="evenodd" d="M8.1 15.5C10.8 15.5 11.4 14.4 11.4 13.4V11.6H7.9V10.9H12.9C14.4 10.9 15.5 9.8 15.5 7.9C15.5 6 14.5 4.9 13 4.9H11.7V6.7C11.7 7.8 10.8 8.7 9.7 8.7H6.3C5.3 8.7 4.5 9.5 4.5 10.5V13.4C4.5 14.5 5.5 15.5 8.1 15.5ZM10 14.4A0.75 0.75 0 1 1 10 12.9A0.75 0.75 0 1 1 10 14.4Z"/></svg>
<div class="tabt" style="left:40px;top:13px">urls.py</div><div class="tabt desc" style="left:94px;top:13px">...\accounts</div>
</div>
<svg class="abs" style="left:1529px;top:57px" width="18" height="19" viewBox="0 0 18 19"><path d="M2.6 2L14.6 9.1L2.6 16.2Z" stroke="#d4d4d4" stroke-width="1.3" fill="none" stroke-linejoin="round"/></svg>
<svg class="abs" style="left:1551px;top:60px" width="12" height="10" viewBox="0 0 12 10"><path d="M1.5 3L6 7.5L10.5 3" stroke="#cccccc" stroke-width="1.4" fill="none"/></svg>
<div class="abs" style="left:1578px;top:57px;width:14px;height:17px;border:1.3px solid #d4d4d4;border-radius:2px"></div>

<!-- breadcrumb -->
<div class="abs crumbt" style="left:20px">School-Management-System</div>
<svg class="abs" style="left:233.5px;top:93px" width="10" height="16" viewBox="0 0 10 16"><path d="M2 2.3L7.8 8L2 13.7" stroke="#b4b4b4" stroke-width="1.2" fill="none"/></svg>
<div class="abs crumbt" style="left:248px">students</div>
<svg class="abs" style="left:314.5px;top:93px" width="10" height="16" viewBox="0 0 10 16"><path d="M2 2.3L7.8 8L2 13.7" stroke="#b4b4b4" stroke-width="1.2" fill="none"/></svg>
<svg class="abs" style="left:334px;top:95px" width="14" height="14" viewBox="0 0 16 16"><path fill="#5eaad6" fill-rule="evenodd" d="M7.9 0.5C5.2 0.5 4.6 1.6 4.6 2.6V4.4H8.1V5.1H3.1C1.6 5.1 0.5 6.2 0.5 8.1C0.5 10 1.5 11.1 3 11.1H4.3V9.3C4.3 8.2 5.2 7.3 6.3 7.3H9.7C10.7 7.3 11.5 6.5 11.5 5.5V2.6C11.5 1.5 10.5 0.5 7.9 0.5ZM6 1.6A0.75 0.75 0 1 1 6 3.1A0.75 0.75 0 1 1 6 1.6Z"/><path fill="#5eaad6" fill-rule="evenodd" d="M8.1 15.5C10.8 15.5 11.4 14.4 11.4 13.4V11.6H7.9V10.9H12.9C14.4 10.9 15.5 9.8 15.5 7.9C15.5 6 14.5 4.9 13 4.9H11.7V6.7C11.7 7.8 10.8 8.7 9.7 8.7H6.3C5.3 8.7 4.5 9.5 4.5 10.5V13.4C4.5 14.5 5.5 15.5 8.1 15.5ZM10 14.4A0.75 0.75 0 1 1 10 12.9A0.75 0.75 0 1 1 10 14.4Z"/></svg>
<div class="abs crumbt" style="left:357px">train_model.py</div>
<svg class="abs" style="left:467px;top:93px" width="10" height="16" viewBox="0 0 10 16"><path d="M2 2.3L7.8 8L2 13.7" stroke="#b4b4b4" stroke-width="1.2" fill="none"/></svg>
<div class="abs crumbt" style="left:482px">...</div>

</body></html>
